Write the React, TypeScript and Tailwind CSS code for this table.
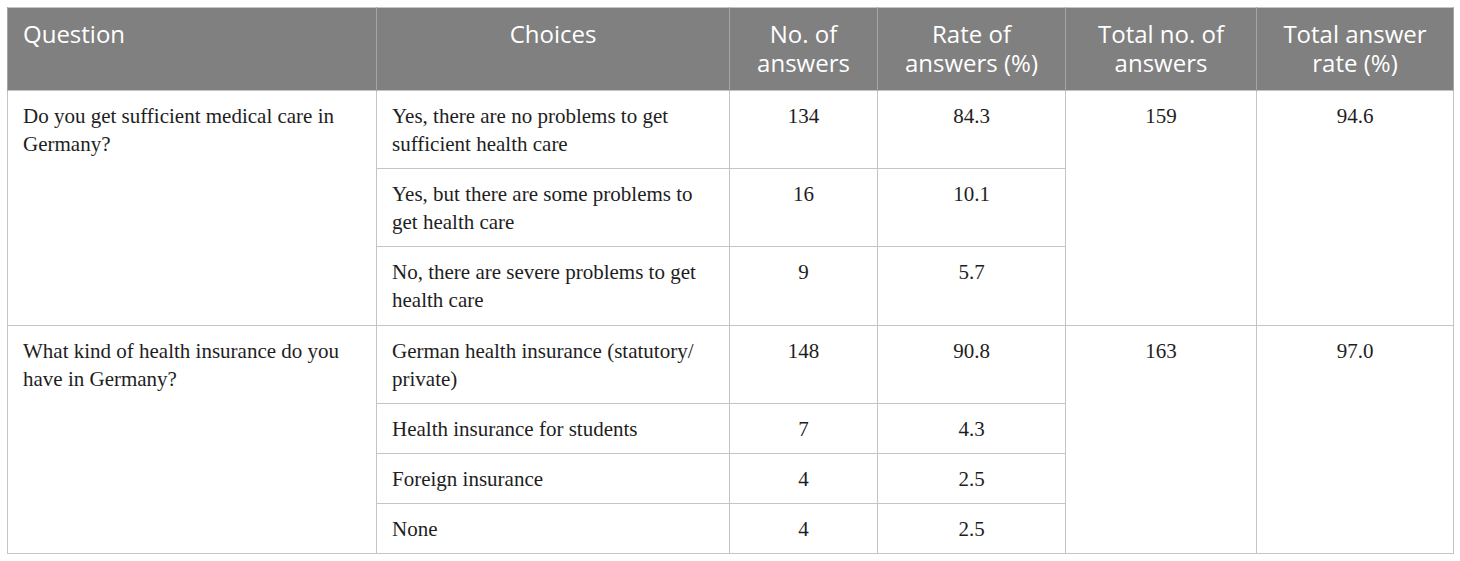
import React from "react";

const serif = { fontFamily: '"Liberation Serif", "Times New Roman", serif' };

type Group = {
  q: string[];
  total: string;
  rate: string;
  rows: { c: string[]; n: string; r: string; h: string }[];
};

const groups: Group[] = [
  {
    q: ["Do you get sufficient medical care in", "Germany?"],
    total: "159",
    rate: "94.6",
    rows: [
      { c: ["Yes, there are no problems to get", "sufficient health care"], n: "134", r: "84.3", h: "h-[78px]" },
      { c: ["Yes, but there are some problems to", "get health care"], n: "16", r: "10.1", h: "h-[78px]" },
      { c: ["No, there are severe problems to get", "health care"], n: "9", r: "5.7", h: "h-[79px]" },
    ],
  },
  {
    q: ["What kind of health insurance do you", "have in Germany?"],
    total: "163",
    rate: "97.0",
    rows: [
      { c: ["German health insurance (statutory/", "private)"], n: "148", r: "90.8", h: "h-[78px]" },
      { c: ["Health insurance for students"], n: "7", r: "4.3", h: "h-[50px]" },
      { c: ["Foreign insurance"], n: "4", r: "2.5", h: "h-[50px]" },
      { c: ["None"], n: "4", r: "2.5", h: "h-[50px]" },
    ],
  },
];

function Lines({ lines }: { lines: string[] }) {
  return (
    <>
      {lines.map((l, i) => (
        <div key={i} className="whitespace-nowrap">
          {l}
        </div>
      ))}
    </>
  );
}

export default function App() {
  const th =
    "bg-[#808080] text-white font-normal align-top pt-[11px] pb-[13px] leading-[29px] text-[24px] border-x border-[#a6a6a6]";
  const td = "border border-[#c4c4c4] align-top pt-[11px] pb-[10px] leading-[28px] text-[21px] text-[#1e1e1e]";
  return (
    <div className="w-[1460px] h-[561px] bg-white pt-[7px] pl-[7px]">
      <table
        className="table-fixed border-collapse w-[1446px] border border-[#c4c4c4]"
        style={{ fontFamily: '"Open Sans", "Liberation Sans", sans-serif' }}
      >
        <colgroup>
          <col className="w-[369px]" />
          <col className="w-[353px]" />
          <col className="w-[148px]" />
          <col className="w-[188px]" />
          <col className="w-[191px]" />
          <col className="w-[197px]" />
        </colgroup>
        <thead>
          <tr className="h-[83px]">
            <th className={`${th} text-left pl-[15px]`}>Question</th>
            <th className={`${th} text-center`}>Choices</th>
            <th className={`${th} text-center`}>No. of<br />answers</th>
            <th className={`${th} text-center`}>Rate of<br />answers (%)</th>
            <th className={`${th} text-center`}>Total no. of<br />answers</th>
            <th className={`${th} text-center`}>Total answer<br />rate (%)</th>
          </tr>
        </thead>
        <tbody style={serif}>
          {groups.map((g) =>
            g.rows.map((r, i) => (
              <tr key={g.q[0] + i} className={r.h}>
                {i === 0 && (
                  <td rowSpan={g.rows.length} className={`${td} pl-[15px]`}>
                    <Lines lines={g.q} />
                  </td>
                )}
                <td className={`${td} pl-[15px]`}>
                  <Lines lines={r.c} />
                </td>
                <td className={`${td} text-center`}>{r.n}</td>
                <td className={`${td} text-center`}>{r.r}</td>
                {i === 0 && (
                  <td rowSpan={g.rows.length} className={`${td} text-center`}>
                    {g.total}
                  </td>
                )}
                {i === 0 && (
                  <td rowSpan={g.rows.length} className={`${td} text-center`}>
                    {g.rate}
                  </td>
                )}
              </tr>
            ))
          )}
        </tbody>
      </table>
    </div>
  );
}
